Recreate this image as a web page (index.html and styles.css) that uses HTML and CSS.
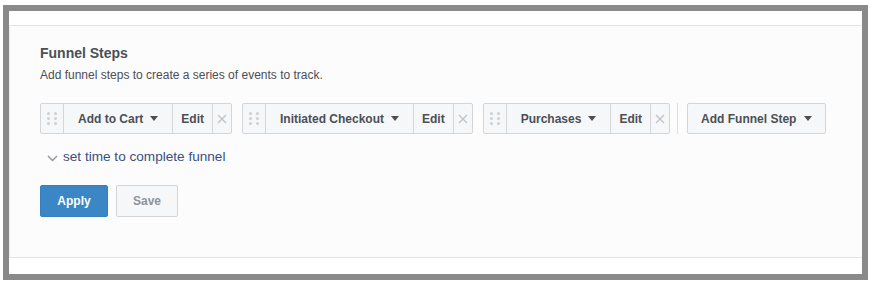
FILE: index.html
```html
<!DOCTYPE html>
<html>
<head>
<meta charset="utf-8">
<link rel="stylesheet" href="styles.css">
</head>
<body>
<div class="frame">
  <div class="panel">
    <h2 class="title">Funnel Steps</h2>
    <p class="subtitle">Add funnel steps to create a series of events to track.</p>
    <div class="steps">
      <div class="step">
        <span class="handle"><i></i><i></i><i></i><i></i><i></i><i></i></span>
        <span class="label">Add to Cart <b class="caret"></b></span>
        <span class="edit">Edit</span>
        <span class="remove"><svg width="10" height="10" viewBox="0 0 10 10"><path d="M1 1L9 9M9 1L1 9" stroke="#bec2c9" stroke-width="1.3"/></svg></span>
      </div>
      <div class="step">
        <span class="handle"><i></i><i></i><i></i><i></i><i></i><i></i></span>
        <span class="label">Initiated Checkout <b class="caret"></b></span>
        <span class="edit">Edit</span>
        <span class="remove"><svg width="10" height="10" viewBox="0 0 10 10"><path d="M1 1L9 9M9 1L1 9" stroke="#bec2c9" stroke-width="1.3"/></svg></span>
      </div>
      <div class="step">
        <span class="handle"><i></i><i></i><i></i><i></i><i></i><i></i></span>
        <span class="label">Purchases <b class="caret"></b></span>
        <span class="edit">Edit</span>
        <span class="remove"><svg width="10" height="10" viewBox="0 0 10 10"><path d="M1 1L9 9M9 1L1 9" stroke="#bec2c9" stroke-width="1.3"/></svg></span>
      </div>
      <span class="divider"></span>
      <button class="add-step">Add Funnel Step <b class="caret"></b></button>
    </div>
    <div class="toggle">
      <svg class="chev" width="11" height="7" viewBox="0 0 11 7"><path d="M1 1L5.5 5.5L10 1" fill="none" stroke="#90949c" stroke-width="1.4"/></svg>
      <span>set time to complete funnel</span>
    </div>
    <div class="actions">
      <button class="btn primary">Apply</button>
      <button class="btn secondary">Save</button>
    </div>
  </div>
</div>
</body>
</html>
```

FILE: styles.css
```css
* { box-sizing: border-box; }
html, body { margin: 0; padding: 0; background: #fff; }
body { font-family: "Liberation Sans", Arial, Helvetica, sans-serif; color: #4b4f56; }

.frame {
  margin: 5px 0 0 3px;
  width: 865px;
  height: 275px;
  border: 6px solid #8a8a8a;
  background: #fff;
  padding-top: 14px;
}

.panel {
  height: 233px;
  background: #fcfcfc;
  border-top: 1px solid #e3e4e6;
  border-bottom: 1px solid #e3e4e6;
  border-left: 1px solid #ececec;
  padding: 18px 0 0 30px;
}

.title {
  margin: 0;
  font-size: 14px;
  line-height: 18px;
  font-weight: bold;
  color: #4b4f56;
}

.subtitle {
  margin: 5px 0 0;
  font-size: 12px;
  line-height: 16px;
  color: #4b4f56;
}

.steps {
  margin-top: 20px;
  display: flex;
  align-items: stretch;
  height: 31px;
}

.step {
  display: flex;
  height: 31px;
  border: 1px solid #d3d5d9;
  border-radius: 2px;
  background: #f6f7f9;
  margin-right: 10px;
  font-size: 12px;
  font-weight: bold;
  color: #4b4f56;
}

.step > span { display: flex; align-items: center; }

.handle {
  width: 22px;
  display: grid !important;
  grid-template-columns: 3px 3px;
  grid-template-rows: repeat(3, 3px);
  column-gap: 4px;
  row-gap: 2px;
  justify-content: center;
  align-content: center;
}
.handle i {
  display: block;
  width: 3px;
  height: 3px;
  border-radius: 50%;
  background: #cdd0d4;
}

.label {
  border-left: 1px solid #d3d5d9;
  padding: 0 14px 0 14px;
  gap: 7px;
}

.caret {
  display: inline-block;
  width: 0;
  height: 0;
  border-left: 4.5px solid transparent;
  border-right: 4.5px solid transparent;
  border-top: 5px solid #4b4f56;
}

.edit {
  border-left: 1px solid #d3d5d9;
  padding: 0 8px;
}

.remove {
  border-left: 1px solid #d3d5d9;
  width: 19px;
  justify-content: center;
}

.divider {
  width: 1px;
  background: #dddfe2;
  margin: 0 9px 0 -3px;
}

.add-step {
  display: flex;
  align-items: center;
  gap: 8px;
  height: 31px;
  padding: 0 13px;
  border: 1px solid #d3d5d9;
  border-radius: 2px;
  background: #f6f7f9;
  font-family: inherit;
  font-size: 12px;
  font-weight: bold;
  color: #4b4f56;
}

.toggle {
  margin-top: 14px;
  display: flex;
  align-items: center;
  font-size: 13.6px;
  line-height: 18px;
  color: #3b4f7e;
}
.chev { margin: 2px 5px 0 7px; }

.actions {
  margin-top: 19px;
  display: flex;
  gap: 8px;
}

.btn {
  height: 32px;
  border-radius: 2px;
  font-family: inherit;
  font-size: 12px;
  font-weight: bold;
  padding: 0;
}
.primary {
  width: 68px;
  background: #3b86c5;
  border: 1px solid #3580be;
  color: #fff;
}
.secondary {
  width: 62px;
  background: #f6f7f9;
  border: 1px solid #d3d5d9;
  color: #8d949e;
}
```
